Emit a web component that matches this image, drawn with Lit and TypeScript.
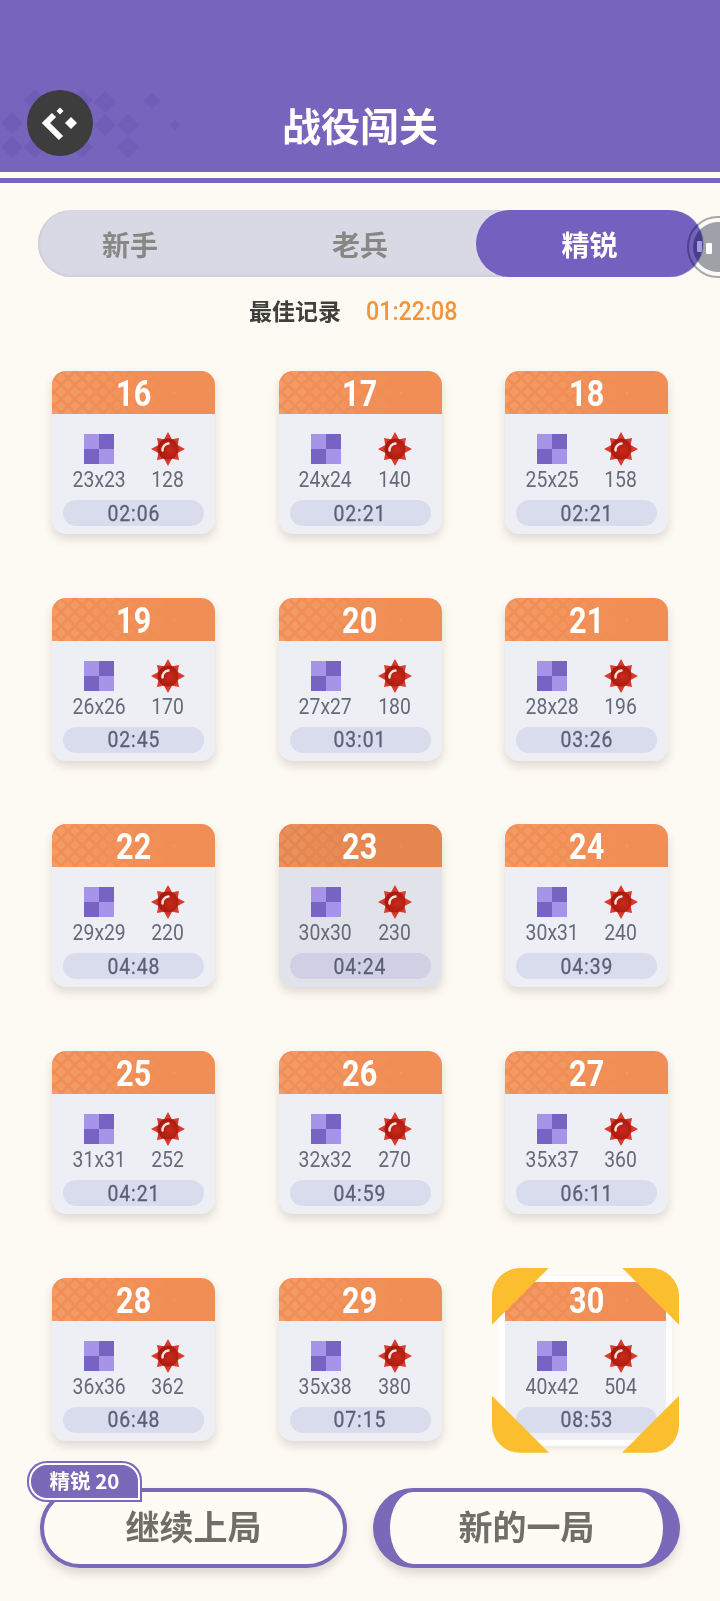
import { LitElement, html, css, svg } from "lit";
import { customElement } from "lit/decorators.js";

const LEVELS = [
  [16, "23x23", 128, "02:06"], [17, "24x24", 140, "02:21"], [18, "25x25", 158, "02:21"],
  [19, "26x26", 170, "02:45"], [20, "27x27", 180, "03:01"], [21, "28x28", 196, "03:26"],
  [22, "29x29", 220, "04:48"], [23, "30x30", 230, "04:24"], [24, "30x31", 240, "04:39"],
  [25, "31x31", 252, "04:21"], [26, "32x32", 270, "04:59"], [27, "35x37", 360, "06:11"],
  [28, "36x36", 362, "06:48"], [29, "35x38", 380, "07:15"], [30, "40x42", 504, "08:53"],
] as const;

const HEAD_DIAMONDS = [
  [35, 100, 11], [58, 100, 11], [82, 100, 11], [105, 102, 11], [152, 101, 8],
  [12, 123, 11], [105, 125, 11], [128, 125, 11], [175, 125, 5],
  [12, 147, 11], [35, 147, 11], [82, 147, 11], [128, 147, 11],
];

const diamond = (x: number, y: number, r: number, o = 1) =>
  svg`<polygon points="${x},${y - r} ${x + r},${y} ${x},${y + r} ${x - r},${y}" opacity="${o}"></polygon>`;

const cardPattern = () => {
  const out = [];
  for (let row = 0; row < 7; row++) {
    for (let col = 0; col < 9; col++) {
      const x = col * 14 + (row % 2 ? 7 : 0) + 2;
      const y = row * 7;
      const o = Math.max(0, 1 - x / 115);
      if (o > 0) out.push(diamond(x, y, 5, o));
    }
  }
  out.push(diamond(122, 22, 2, 0.5));
  return out;
};

const starPoints = (() => {
  const pts: string[] = [];
  for (let i = 0; i < 16; i++) {
    const a = (Math.PI * i) / 8 - Math.PI / 2;
    const r = i % 2 ? 10.5 : i % 4 === 0 ? 17 : 15.5;
    pts.push(`${(17 + r * Math.cos(a)).toFixed(1)},${(17 + r * Math.sin(a)).toFixed(1)}`);
  }
  return pts.join(" ");
})();

@customElement("app-root")
export class AppRoot extends LitElement {
  static styles = css`
    :host {
      display: block;
      position: relative;
      width: 720px;
      height: 1601px;
      overflow: hidden;
      background: #fdfaf3;
      font-family: "Noto Sans CJK SC", "Roboto", sans-serif;
    }
    .header {
      position: relative;
      height: 172px;
      background: #7764bd;
      display: flex;
      align-items: flex-end;
      justify-content: center;
      box-sizing: border-box;
      padding-bottom: 15px;
    }
    .head-deco { position: absolute; left: 0; top: 0; fill: #705db8; }
    .back {
      position: absolute;
      left: 27px;
      top: 90px;
      width: 66px;
      height: 66px;
      border-radius: 50%;
      background: #3d3d3d;
    }
    .back svg { position: absolute; left: 0; top: 0; }
    .title {
      position: relative;
      color: #fff;
      font-size: 39px;
      font-weight: 700;
      line-height: 66px;
      height: 66px;
    }
    .strip {
      margin-top: 6px;
      height: 5px;
      background: #7764bd;
    }
    .tabs {
      margin: 27px 16px 0 38px;
      height: 67px;
      box-sizing: border-box;
      border-radius: 34px;
      background: #d8d9e4;
      box-shadow: inset 2px 0 1px #cfd0dc, inset 0 -2px 1px #cfd0dc;
      display: flex;
      align-items: stretch;
    }
    .tab {
      display: flex;
      align-items: center;
      justify-content: center;
      font-size: 28px;
      font-weight: 700;
      color: #878784;
    }
    .t1 { width: 184px; }
    .t2 { width: 230px; margin-left: 23px; }
    .t3 {
      width: 227px;
      margin-left: 1px;
      border-radius: 34px;
      background: #7360bf;
      color: #fff;
    }
    .best {
      margin-top: 13px;
      height: 40px;
      display: flex;
      align-items: center;
      padding-left: 249px;
      font-size: 23px;
      font-weight: 700;
      color: #3f3f3d;
    }
    .best-time {
      position: relative;
      top: 1px;
      margin-left: 25px;
      font-family: "Roboto", sans-serif;
      font-size: 25px;
      font-weight: 500;
      color: #f0953a;
      display: inline-block;
      transform: scaleX(0.93);
      transform-origin: left center;
    }
    .grid {
      margin: 41px 0 0 52px;
      width: 616px;
      display: grid;
      grid-template-columns: repeat(3, 163px);
      justify-content: space-between;
      row-gap: 63.7px;
    }
    .card {
      position: relative;
      height: 163px;
      border-radius: 14px;
      background: #eeeef5;
      box-shadow: 0 5px 10px rgba(60, 50, 40, 0.16);
    }
    .card.pressed { background: #e2e2ea; }
    .card-head {
      position: relative;
      height: 43px;
      border-radius: 14px 14px 0 0;
      background: #f18e55;
      overflow: hidden;
      display: flex;
      align-items: center;
      justify-content: center;
    }
    .pressed .card-head { background: #e5864f; }
    .pattern { position: absolute; left: 0; top: 0; fill: #f39c69; }
    .pressed .pattern { fill: #e9925f; }
    .no {
      position: relative;
      top: 2px;
      color: #fff;
      font-family: "Roboto", sans-serif;
      font-size: 36px;
      font-weight: 700;
      line-height: 43px;
      transform: scaleX(0.85);
    }
    .stats {
      margin-top: 20px;
      display: grid;
      grid-template-columns: 69px 69px;
      justify-content: center;
      color: #666a78;
    }
    .stat {
      display: flex;
      flex-direction: column;
      align-items: center;
    }
    .icon {
      height: 30px;
      display: flex;
      align-items: center;
      justify-content: center;
    }
    .val {
      margin-top: 4px;
      font-family: "Roboto", sans-serif;
      font-size: 22px;
      line-height: 24px;
      transform: scaleX(0.88);
    }
    .pill {
      margin: 8px 11px 0;
      height: 26px;
      border-radius: 13px;
      background: #d9dcec;
      display: flex;
      align-items: center;
      justify-content: center;
      color: #5c6075;
    }
    .pressed .pill { background: #cfd0e3; }
    .time {
      font-family: "Roboto", sans-serif;
      font-size: 22px;
      font-weight: 400;
      transform: scaleX(0.88);
      letter-spacing: 1px;
      -webkit-text-stroke: 0.3px #5c6075;
    }
    .frame {
      position: absolute;
      left: -7px;
      top: -2px;
      width: 174px;
      height: 170px;
      box-sizing: border-box;
      border-style: solid;
      border-color: #fff;
      border-width: 6px 6px 6px 7px;
    }
    .corner {
      position: absolute;
      width: 57px;
      height: 57px;
      background: #fbbe2e;
    }
    .tl { left: -13px; top: -10px; border-top-left-radius: 28px; clip-path: polygon(0 0, 100% 0, 0 100%); }
    .tr { right: -11px; top: -10px; border-top-right-radius: 28px; clip-path: polygon(0 0, 100% 0, 100% 100%); }
    .bl { left: -13px; bottom: -12px; border-bottom-left-radius: 28px; clip-path: polygon(0 0, 100% 100%, 0 100%); }
    .br { right: -11px; bottom: -12px; border-bottom-right-radius: 28px; clip-path: polygon(100% 0, 100% 100%, 0 100%); }
    .actions {
      margin: 47px 0 0 40px;
      display: flex;
      gap: 26px;
    }
    .btn {
      position: relative;
      width: 307px;
      height: 80px;
      box-sizing: border-box;
      border-radius: 40px;
      background: #fcfbf4;
      border: 4px solid #7a68b8;
      padding-bottom: 4px;
      box-shadow: 0 6px 8px rgba(60, 50, 40, 0.16);
      display: flex;
      align-items: center;
      justify-content: center;
      font-size: 34px;
      font-weight: 700;
      color: #6f6f68;
    }
    .btn.alt { border-width: 4px 17px; }
    .badge {
      position: absolute;
      left: -17px;
      top: -31px;
      width: 115px;
      height: 41px;
      box-sizing: border-box;
      padding-bottom: 2px;
      border-radius: 20px 20px 0 20px;
      background: #7a68b8;
      box-shadow: inset 0 0 0 2px #7a68b8, inset 0 0 0 4px #fff;
      display: flex;
      align-items: center;
      justify-content: center;
      color: #fff;
      font-size: 20.5px;
      font-weight: 700;
    }
    .ball {
      position: absolute;
      left: 687px;
      top: 216px;
      width: 62px;
      height: 62px;
      box-sizing: border-box;
      border-radius: 50%;
      border: 2px solid #a8acb8;
      mix-blend-mode: multiply;
      display: flex;
      align-items: center;
      justify-content: center;
    }
    .ball-in {
      width: 50px;
      height: 50px;
      border-radius: 50%;
      background: #a0a4b0;
    }
    .dot {
      position: absolute;
      top: 241px;
      width: 5px;
      height: 11px;
      border-radius: 1px;
    }
    .d1 { left: 697px; background: #a896e6; }
    .d2 { left: 706px; top: 243px; width: 6px; background: #fff; }
  `;

  private checker() {
    return html`<svg width="30" height="30" viewBox="0 0 30 30">
      <rect width="15" height="15" fill="#a594e8"></rect>
      <rect x="15" width="15" height="15" fill="#7763c2"></rect>
      <rect y="15" width="15" height="15" fill="#7763c2"></rect>
      <rect x="15" y="15" width="15" height="15" fill="#a594e8"></rect>
    </svg>`;
  }

  private mine(id: number) {
    return html`<svg width="34" height="34" viewBox="0 0 34 34">
      <defs>
        <radialGradient id="m${id}" cx="0.6" cy="0.55" r="0.6">
          <stop offset="0" stop-color="#c92a1c"></stop>
          <stop offset="1" stop-color="#a3180c"></stop>
        </radialGradient>
      </defs>
      <polygon points="${starPoints}" fill="#d93a2e"></polygon>
      <circle cx="17" cy="17" r="10.5" fill="url(#m${id})"></circle>
      <path d="M11.5 18.5 A6.5 6.5 0 0 1 17.5 11.5" fill="none" stroke="#f8e4df" stroke-width="2.4" stroke-linecap="round"></path>
    </svg>`;
  }

  private card(l: readonly [number, string, number, string]) {
    const [no, size, mines, time] = l;
    return html`<div class="card ${no === 23 ? "pressed" : ""}">
      <div class="card-head">
        <svg class="pattern" width="163" height="43">${cardPattern()}</svg>
        <span class="no">${no}</span>
      </div>
      <div class="stats">
        <div class="stat"><div class="icon">${this.checker()}</div><span class="val">${size}</span></div>
        <div class="stat"><div class="icon">${this.mine(no)}</div><span class="val">${mines}</span></div>
      </div>
      <div class="pill"><span class="time">${time}</span></div>
      ${no === 30
        ? html`<div class="frame"></div>
            <div class="corner tl"></div><div class="corner tr"></div>
            <div class="corner bl"></div><div class="corner br"></div>`
        : ""}
    </div>`;
  }

  render() {
    return html`
      <div class="header">
        <svg class="head-deco" width="200" height="172">${HEAD_DIAMONDS.map(([x, y, r]) => diamond(x, y, r))}</svg>
        <div class="back">
          <svg width="66" height="66" viewBox="27 90 66 66">
            <polyline points="54,115 46,123 61,138" fill="none" stroke="#fff" stroke-width="6"></polyline>
            <polygon points="60,107.5 63.5,111 60,114.5 56.5,111" fill="#fff"></polygon>
            <polygon points="71,117 77,123 71,129 65,123" fill="#fff"></polygon>
          </svg>
        </div>
        <div class="title">战役闯关</div>
      </div>
      <div class="strip"></div>
      <div class="tabs">
        <div class="tab t1">新手</div>
        <div class="tab t2">老兵</div>
        <div class="tab t3">精锐</div>
      </div>
      <div class="best">最佳记录<span class="best-time">01:22:08</span></div>
      <div class="grid">${LEVELS.map((l) => this.card(l))}</div>
      <div class="actions">
        <div class="btn"><div class="badge">精锐 20</div>继续上局</div>
        <div class="btn alt">新的一局</div>
      </div>
      <div class="ball"><div class="ball-in"></div></div>
      <div class="dot d1"></div>
      <div class="dot d2"></div>
    `;
  }
}
